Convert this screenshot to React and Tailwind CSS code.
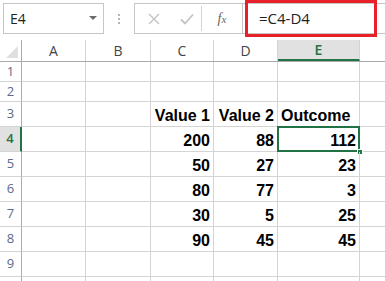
import React from "react";

const cols = ["A", "B", "C", "D", "E", ""];
const widths = ["w-[64px]", "w-[65px]", "w-[63px]", "w-[64px]", "w-[82px]", "w-[64px]"];

const rows = [
  { n: 1, h: "h-[20px]" },
  { n: 2, h: "h-[20px]" },
  { n: 3, h: "h-[25px]", c: "Value 1", d: "Value 2", e: "Outcome", head: true },
  { n: 4, h: "h-[25px]", c: "200", d: "88", e: "112" },
  { n: 5, h: "h-[25px]", c: "50", d: "27", e: "23" },
  { n: 6, h: "h-[25px]", c: "80", d: "77", e: "3" },
  { n: 7, h: "h-[25px]", c: "30", d: "5", e: "25" },
  { n: 8, h: "h-[25px]", c: "90", d: "45", e: "45" },
  { n: 9, h: "h-[25px]" },
  { n: "", h: "h-[25px]" },
];

const Cell = ({ w, children, left }) => (
  <div
    className={`${w} shrink-0 h-full border-r border-b border-[#d4d4d4] flex items-end pb-[2px] ${
      left ? "justify-start pl-[3px]" : "justify-end pr-[3px]"
    } font-['Liberation_Sans',sans-serif] font-bold text-[16px] text-black leading-none whitespace-nowrap`}
  >
    {children}
  </div>
);

export default function App() {
  return (
    <div className="w-[385px] h-[281px] bg-white overflow-hidden relative font-['Open_Sans',sans-serif]">
      {/* toolbar */}
      <div className="h-[40px] flex items-start pt-[3px]">
        <div className="ml-[3px] w-[101px] h-[31px] border border-[#c6c6c6] flex items-center justify-between pl-[6px] pr-[6px]">
          <span className="text-[14px] text-[#222]">E4</span>
          <svg width="8" height="5" viewBox="0 0 8 5">
            <path d="M0 0 L8 0 L4 4 Z" fill="#6b6b6b" />
          </svg>
        </div>
        <div className="w-[30px] h-[31px] flex flex-col items-center justify-center gap-[2px]">
          <span className="w-[2px] h-[2px] bg-[#b5b5b5]" />
          <span className="w-[2px] h-[2px] bg-[#b5b5b5]" />
          <span className="w-[2px] h-[2px] bg-[#b5b5b5]" />
        </div>
        <div className="w-[109px] h-[31px] border border-[#c6c6c6] flex items-center">
          <div className="w-[37px] flex justify-center">
            <svg width="12" height="12" viewBox="0 0 12 12">
              <path d="M1 1 L11 11 M11 1 L1 11" stroke="#c3c3c3" strokeWidth="1.4" />
            </svg>
          </div>
          <div className="w-[29px] flex justify-center">
            <svg width="14" height="12" viewBox="0 0 14 12">
              <path d="M1 6.5 L5 10.5 L13 1.5" stroke="#c3c3c3" strokeWidth="1.8" fill="none" />
            </svg>
          </div>
          <div className="w-px h-[25px] bg-[#d4d4d4]" />
          <div className="flex-1 flex justify-center">
            <span className="font-['Liberation_Serif',serif] italic text-[14px] text-[#666]">
              f<span className="text-[11px]">x</span>
            </span>
          </div>
        </div>
        <div className="flex-1 h-[31px] border-y border-[#c6c6c6] flex items-center pl-[16px]">
          <span className="text-[15px] text-[#222]">=C4-D4</span>
        </div>
      </div>

      {/* red annotation */}
      <div className="absolute left-[245px] top-0 w-[132px] h-[37px] border-[3px] border-[#e8202a]" />

      {/* column headers */}
      <div className="h-[22px] flex border-b border-[#ababab]">
        <div className="w-[22px] shrink-0 h-full border-r border-[#ababab] relative">
          <svg className="absolute right-[3px] bottom-[3px]" width="12" height="12" viewBox="0 0 12 12">
            <path d="M12 0 L12 12 L0 12 Z" fill="#dfdfdf" />
          </svg>
        </div>
        {cols.map((c, i) => (
          <div
            key={i}
            className={`${widths[i]} shrink-0 h-full border-r border-[#d4d4d4] flex items-center justify-center text-[14px] ${
              c === "E" ? "bg-[#e1e1e1] text-[#217346] font-semibold border-b-2 border-b-[#217346]" : "text-[#444]"
            }`}
          >
            {c}
          </div>
        ))}
      </div>

      {/* rows */}
      {rows.map((r, idx) => (
        <div key={idx} className={`${r.h} flex`}>
          <div
            className={`w-[22px] shrink-0 h-full border-b border-[#d4d4d4] flex items-center justify-center text-[13px] ${
              r.n === 4
                ? "bg-[#e1e1e1] text-[#217346] font-semibold border-r-2 border-r-[#217346]"
                : "text-[#5b6a8a] border-r border-r-[#ababab]"
            }`}
          >
            {r.n}
          </div>
          <Cell w={widths[0]} />
          <Cell w={widths[1]} />
          <Cell w={widths[2]}>{r.c}</Cell>
          <Cell w={widths[3]}>{r.d}</Cell>
          <div className={`${widths[4]} shrink-0 h-full relative`}>
            <Cell w="w-full" left={r.head}>{r.e}</Cell>
            {r.n === 4 && (
              <>
                <div className="absolute -left-[1px] -top-[1px] right-0 bottom-0 border-2 border-[#217346]" />
                <div className="absolute -right-[3px] -bottom-[3px] w-[6px] h-[6px] bg-[#217346] border border-white" />
              </>
            )}
          </div>
          <Cell w={widths[5]} />
        </div>
      ))}
    </div>
  );
}
